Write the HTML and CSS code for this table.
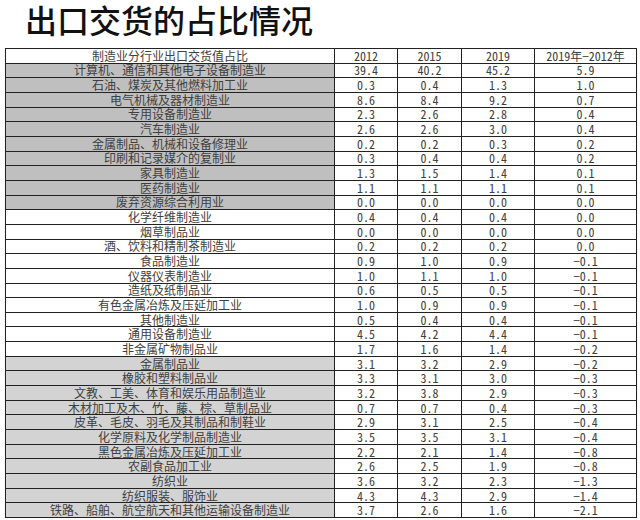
FILE: index.html
```html
<!DOCTYPE html>
<html lang="zh">
<head>
<meta charset="utf-8">
<title>出口交货的占比情况</title>
<link rel="stylesheet" href="styles.css">
</head>
<body>
<h1 class="title">出口交货的占比情况</h1>
<table class="grid">
<colgroup>
<col class="c-name"><col class="c-y"><col class="c-y2"><col class="c-y3"><col class="c-d">
</colgroup>
<thead>
<tr class="head"><td class="name">制造业分行业出口交货值占比</td><td>2012</td><td>2015</td><td>2019</td><td>2019年−2012年</td></tr>
</thead>
<tbody>
<tr class="up"><td class="name">计算机、通信和其他电子设备制造业</td><td>39.4</td><td>40.2</td><td>45.2</td><td>5.9</td></tr>
<tr class="up"><td class="name">石油、煤炭及其他燃料加工业</td><td>0.3</td><td>0.4</td><td>1.3</td><td>1.0</td></tr>
<tr class="up"><td class="name">电气机械及器材制造业</td><td>8.6</td><td>8.4</td><td>9.2</td><td>0.7</td></tr>
<tr class="up"><td class="name">专用设备制造业</td><td>2.3</td><td>2.6</td><td>2.8</td><td>0.4</td></tr>
<tr class="up"><td class="name">汽车制造业</td><td>2.6</td><td>2.6</td><td>3.0</td><td>0.4</td></tr>
<tr class="up"><td class="name">金属制品、机械和设备修理业</td><td>0.2</td><td>0.2</td><td>0.3</td><td>0.2</td></tr>
<tr class="up"><td class="name">印刷和记录媒介的复制业</td><td>0.3</td><td>0.4</td><td>0.4</td><td>0.2</td></tr>
<tr class="up"><td class="name">家具制造业</td><td>1.3</td><td>1.5</td><td>1.4</td><td>0.1</td></tr>
<tr class="up"><td class="name">医药制造业</td><td>1.1</td><td>1.1</td><td>1.1</td><td>0.1</td></tr>
<tr class="up"><td class="name">废弃资源综合利用业</td><td>0.0</td><td>0.0</td><td>0.0</td><td>0.0</td></tr>
<tr><td class="name">化学纤维制造业</td><td>0.4</td><td>0.4</td><td>0.4</td><td>0.0</td></tr>
<tr><td class="name">烟草制品业</td><td>0.0</td><td>0.0</td><td>0.0</td><td>0.0</td></tr>
<tr><td class="name">酒、饮料和精制茶制造业</td><td>0.2</td><td>0.2</td><td>0.2</td><td>0.0</td></tr>
<tr><td class="name">食品制造业</td><td>0.9</td><td>1.0</td><td>0.9</td><td>−0.1</td></tr>
<tr><td class="name">仪器仪表制造业</td><td>1.0</td><td>1.1</td><td>1.0</td><td>−0.1</td></tr>
<tr><td class="name">造纸及纸制品业</td><td>0.6</td><td>0.5</td><td>0.5</td><td>−0.1</td></tr>
<tr><td class="name">有色金属冶炼及压延加工业</td><td>1.0</td><td>0.9</td><td>0.9</td><td>−0.1</td></tr>
<tr><td class="name">其他制造业</td><td>0.5</td><td>0.4</td><td>0.4</td><td>−0.1</td></tr>
<tr><td class="name">通用设备制造业</td><td>4.5</td><td>4.2</td><td>4.4</td><td>−0.1</td></tr>
<tr><td class="name">非金属矿物制品业</td><td>1.7</td><td>1.6</td><td>1.4</td><td>−0.2</td></tr>
<tr class="down"><td class="name">金属制品业</td><td>3.1</td><td>3.2</td><td>2.9</td><td>−0.2</td></tr>
<tr class="down"><td class="name">橡胶和塑料制品业</td><td>3.3</td><td>3.1</td><td>3.0</td><td>−0.3</td></tr>
<tr class="down"><td class="name">文教、工美、体育和娱乐用品制造业</td><td>3.2</td><td>3.8</td><td>2.9</td><td>−0.3</td></tr>
<tr class="down"><td class="name">木材加工及木、竹、藤、棕、草制品业</td><td>0.7</td><td>0.7</td><td>0.4</td><td>−0.3</td></tr>
<tr class="down"><td class="name">皮革、毛皮、羽毛及其制品和制鞋业</td><td>2.9</td><td>3.1</td><td>2.5</td><td>−0.4</td></tr>
<tr class="down"><td class="name">化学原料及化学制品制造业</td><td>3.5</td><td>3.5</td><td>3.1</td><td>−0.4</td></tr>
<tr class="down"><td class="name">黑色金属冶炼及压延加工业</td><td>2.2</td><td>2.1</td><td>1.4</td><td>−0.8</td></tr>
<tr class="down"><td class="name">农副食品加工业</td><td>2.6</td><td>2.5</td><td>1.9</td><td>−0.8</td></tr>
<tr class="down"><td class="name">纺织业</td><td>3.6</td><td>3.2</td><td>2.3</td><td>−1.3</td></tr>
<tr class="down"><td class="name">纺织服装、服饰业</td><td>4.3</td><td>4.3</td><td>2.9</td><td>−1.4</td></tr>
<tr class="down"><td class="name">铁路、船舶、航空航天和其他运输设备制造业</td><td>3.7</td><td>2.6</td><td>1.6</td><td>−2.1</td></tr>
</tbody>
</table>
</body>
</html>
```

FILE: styles.css
```css
html, body {
  margin: 0;
  padding: 0;
  background: #ffffff;
}

.title {
  box-sizing: border-box;
  height: 48px;
  margin: 0;
  padding: 3px 0 0 25px;
  font-family: "Noto Sans CJK SC", "Noto Sans CJK JP", sans-serif;
  font-size: 32px;
  font-weight: 500;
  line-height: 32px;
  color: #111111;
}

.grid {
  margin-left: 5px;
  width: 631px;
  table-layout: fixed;
  border-collapse: collapse;
  font-family: "Noto Sans Mono CJK SC", "Noto Sans CJK SC", "DejaVu Sans Mono", monospace;
  font-size: 12px;
  color: #404040;
  box-shadow: 0 2px 2px #e6e6e6;
}

.c-name { width: 329px; }
.c-y { width: 63px; }
.c-y2 { width: 64px; }
.c-y3 { width: 73px; }
.c-d { width: 102px; }

.grid td {
  height: 13.66px;
  padding: 0;
  border: 1px solid #222222;
  text-align: center;
  vertical-align: middle;
  line-height: 12px;
  white-space: nowrap;
}

.grid tr.up .name { background: #bfbfbf; }
.grid tr.down .name { background: #d3d3d3; }
```
